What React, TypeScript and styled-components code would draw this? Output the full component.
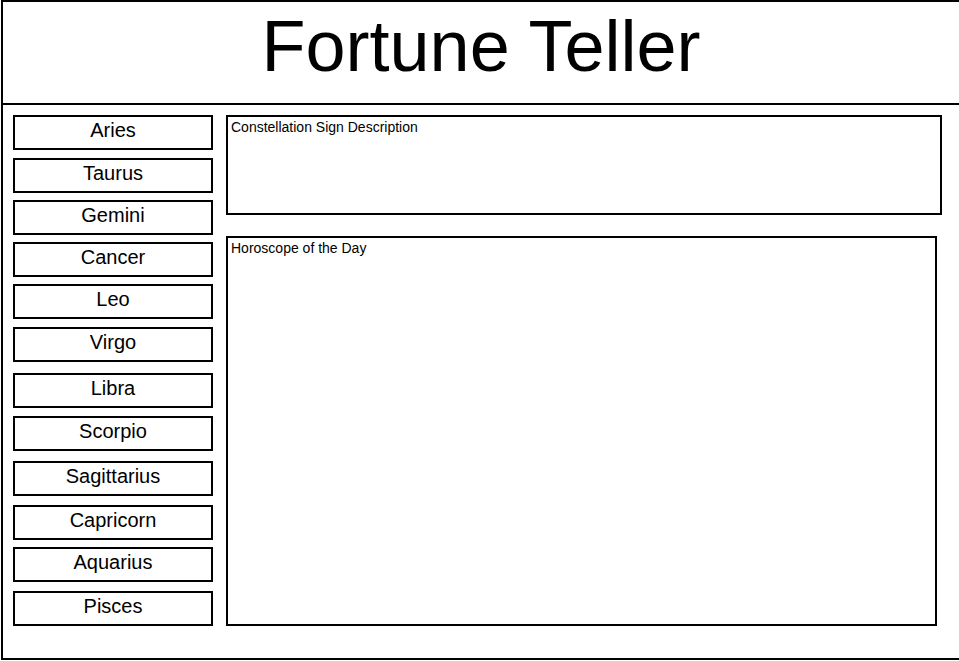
import styled, { createGlobalStyle } from "styled-components"

import type { FC } from "react"

type Sign = {
  name: string
  offset: number
}

const signs: Sign[] = [
  { name: "Aries", offset: 0 },
  { name: "Taurus", offset: 8 },
  { name: "Gemini", offset: 7 },
  { name: "Cancer", offset: 7 },
  { name: "Leo", offset: 7 },
  { name: "Virgo", offset: 8 },
  { name: "Libra", offset: 11 },
  { name: "Scorpio", offset: 8 },
  { name: "Sagittarius", offset: 10 },
  { name: "Capricorn", offset: 9 },
  { name: "Aquarius", offset: 7 },
  { name: "Pisces", offset: 9 },
]

const GlobalStyle = createGlobalStyle`
  html,
  body {
    margin: 0;
    overflow: hidden;
    background: #fff;
    font-family: "Liberation Sans", Arial, sans-serif;
    color: #000;
  }
`

const Frame = styled.div`
  box-sizing: border-box;
  width: 960px;
  height: 660px;
  margin-left: 1px;
  border: 2px solid #000;
  display: flex;
  flex-direction: column;
`

const Header = styled.header`
  box-sizing: border-box;
  height: 103px;
  padding-top: 4px;
  border-bottom: 2px solid #000;
  text-align: center;
`

const Title = styled.h1`
  margin: 0;
  font-size: 72px;
  font-weight: 400;
  line-height: 80px;
`

const Body = styled.div`
  display: flex;
  align-items: flex-start;
  gap: 13px;
  padding: 10px 0 0 10px;
`

const SignList = styled.nav`
  display: flex;
  flex-direction: column;
  width: 200px;
`

const SignButton = styled.div<{ $offset: number }>`
  box-sizing: border-box;
  height: 35px;
  margin-top: ${props => props.$offset}px;
  padding-top: 2px;
  border: 2px solid #000;
  font-size: 20px;
  line-height: 23px;
  text-align: center;
  cursor: pointer;
`

const Panels = styled.div`
  display: flex;
  flex-direction: column;
  gap: 21px;
`

const Panel = styled.section<{ $width: number; $height: number }>`
  box-sizing: border-box;
  width: ${props => props.$width}px;
  height: ${props => props.$height}px;
  padding: 2px 3px;
  border: 2px solid #000;
  font-size: 14px;
  line-height: 16px;
`

const App: FC = () => {
  return (
    <>
      <GlobalStyle />
      <Frame>
        <Header>
          <Title>Fortune Teller</Title>
        </Header>
        <Body>
          <SignList>
            {signs.map(sign => (
              <SignButton key={sign.name} $offset={sign.offset}>
                {sign.name}
              </SignButton>
            ))}
          </SignList>
          <Panels>
            <Panel $width={716} $height={100}>
              Constellation Sign Description
            </Panel>
            <Panel $width={711} $height={390}>
              Horoscope of the Day
            </Panel>
          </Panels>
        </Body>
      </Frame>
    </>
  )
}

export default App
